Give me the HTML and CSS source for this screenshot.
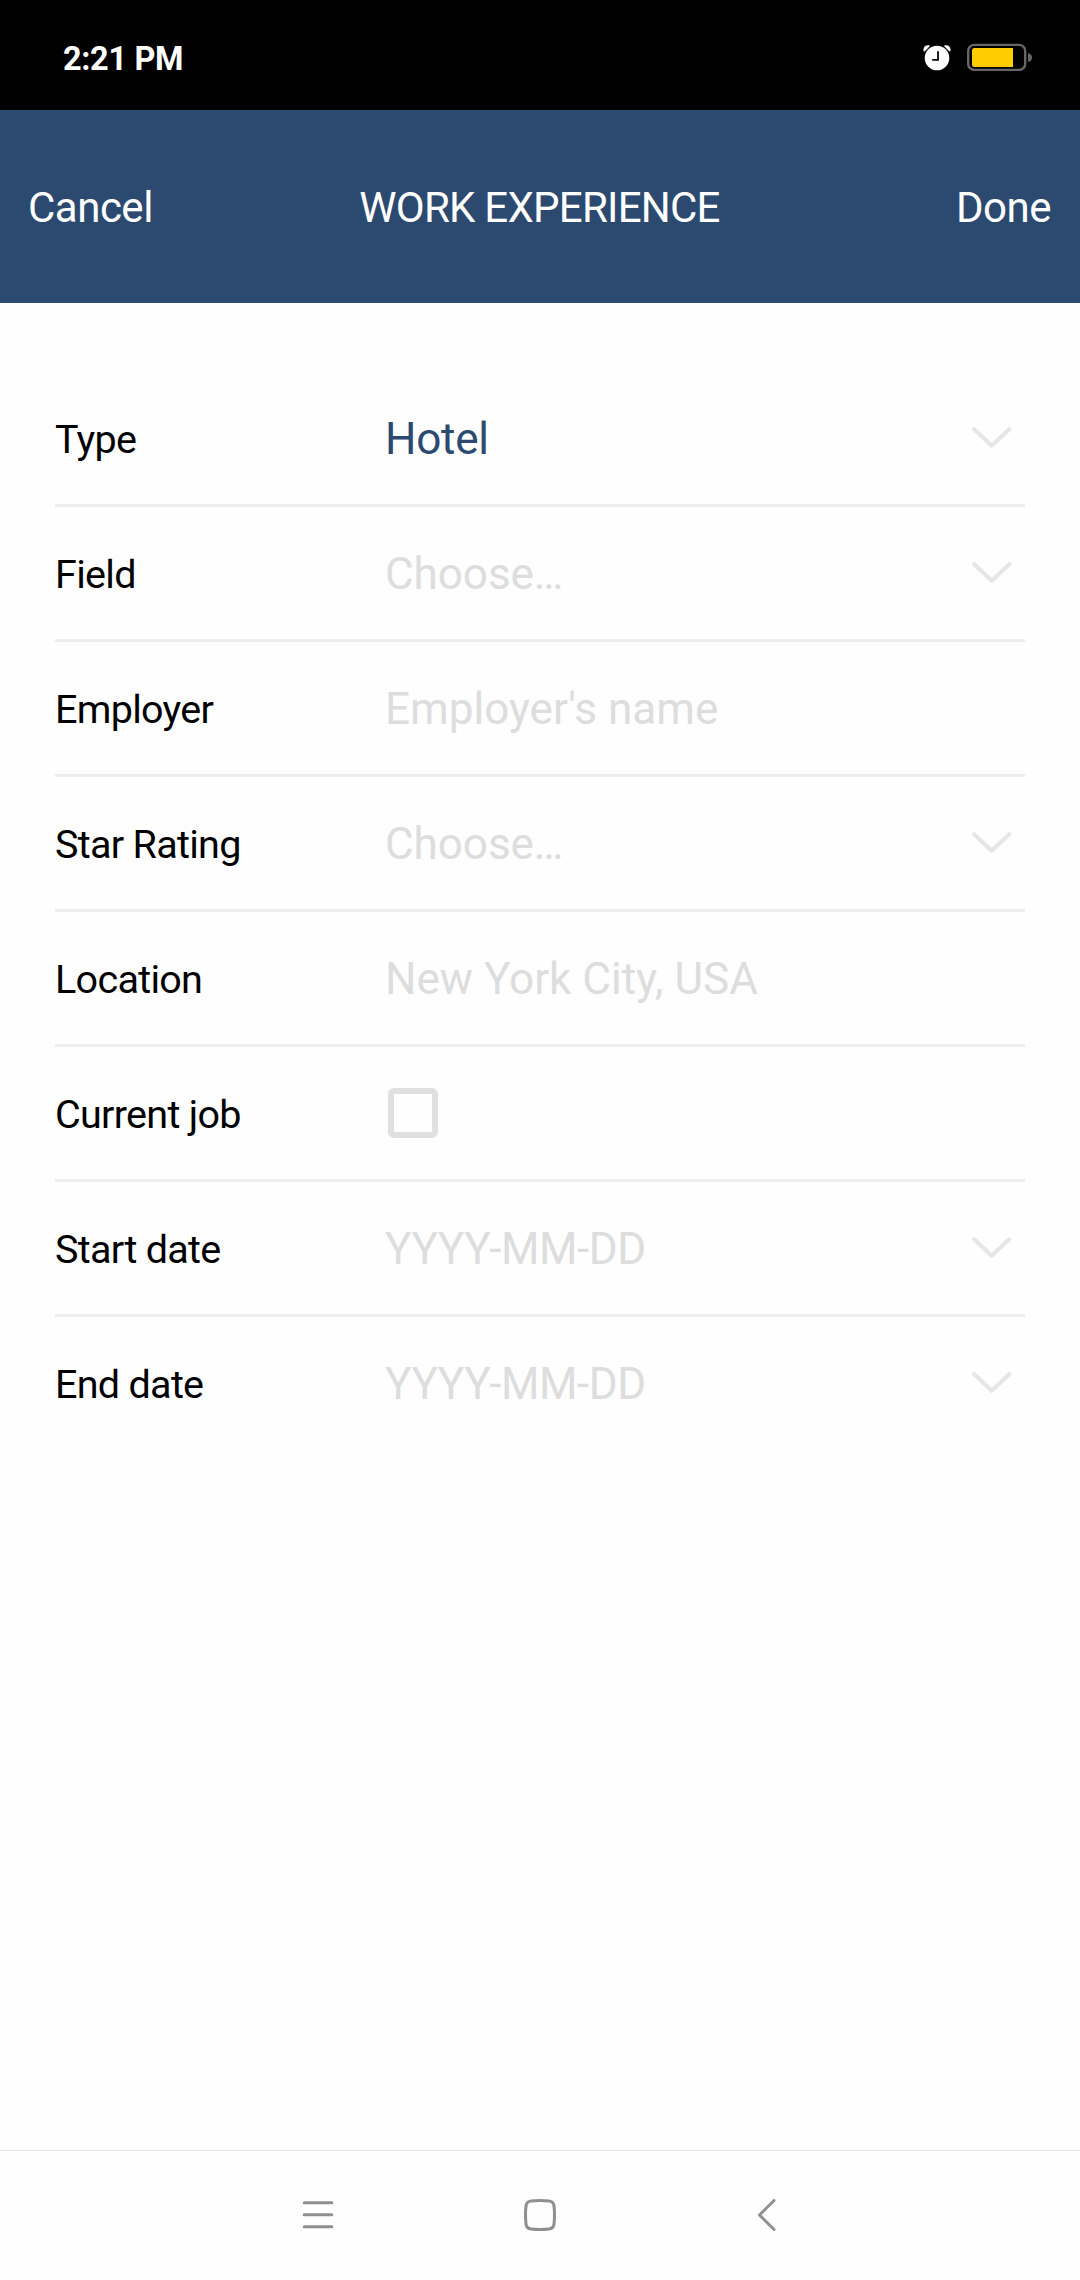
FILE: index.html
```html
<!DOCTYPE html>
<html lang="en">
<head>
<meta charset="utf-8">
<title>Work experience</title>
<link rel="stylesheet" href="styles.css">
</head>
<body>
<svg class="defs" width="0" height="0" aria-hidden="true">
  <symbol id="chevron" viewBox="0 0 40 22"><path d="M2.2 2.3 19.7 18.8 37.2 2.3" fill="none" stroke="#e6e6e6" stroke-width="4.2" stroke-linecap="round" stroke-linejoin="round"/></symbol>
</svg>
<div class="screen">
  <div class="status">
    <span class="time">2:21 PM</span>
    <div class="status-icons">
      <svg width="28" height="28" viewBox="0 0 28 28">
        <path d="M.6 8.2C-.3 4 2.8 1.2 7.2 2.7L1.6 8.4ZM27.4 8.2C28.3 4 25.2 1.2 20.8 2.7L26.4 8.4Z" fill="#fff"/>
        <circle cx="14" cy="15" r="12.3" fill="#fff"/>
        <path d="M15 8.3V16.8H9.2" fill="none" stroke="#000" stroke-width="1.8"/>
      </svg>
      <svg width="66" height="28" viewBox="0 0 66 28">
        <rect x="1.2" y="1.9" width="57" height="25" rx="6" fill="none" stroke="#666" stroke-width="2.4"/>
        <path d="M7.5 5H46V24H7.5Q5 24 5 21.5V7.5Q5 5 7.5 5Z" fill="#fc0"/>
        <path d="M61 10Q65 11 65 14.5T61 19Z" fill="#666"/>
      </svg>
    </div>
  </div>
  <header class="header">
    <span class="action">Cancel</span>
    <span class="title">WORK EXPERIENCE</span>
    <span class="action done">Done</span>
  </header>
  <main class="form">
    <div class="row"><span class="label">Type</span><span class="value chosen">Hotel</span><svg class="chev"><use href="#chevron"/></svg></div>
    <div class="row"><span class="label">Field</span><span class="value choose">Choose…</span><svg class="chev"><use href="#chevron"/></svg></div>
    <div class="row"><span class="label">Employer</span><span class="value">Employer's name</span></div>
    <div class="row"><span class="label">Star Rating</span><span class="value choose">Choose…</span><svg class="chev"><use href="#chevron"/></svg></div>
    <div class="row"><span class="label">Location</span><span class="value">New York City, USA</span></div>
    <div class="row"><span class="label">Current job</span><span class="checkbox"></span></div>
    <div class="row"><span class="label">Start date</span><span class="value date">YYYY-MM-DD</span><svg class="chev"><use href="#chevron"/></svg></div>
    <div class="row"><span class="label">End date</span><span class="value date">YYYY-MM-DD</span><svg class="chev"><use href="#chevron"/></svg></div>
  </main>
  <nav class="nav">
    <svg width="32" height="32" viewBox="0 0 32 32"><path d="M2.2 3.7H29.8M2.2 15.8H29.8M2.2 27.8H29.8"/></svg>
    <svg width="32" height="32" viewBox="0 0 32 32"><path d="M7 2Q16 1 25 2Q29.5 2.5 30 7Q31 16 30 25Q29.5 29.5 25 30Q16 31 7 30Q2.5 29.5 2 25Q1 16 2 7Q2.5 2.5 7 2Z"/></svg>
    <svg class="back" width="20" height="32" viewBox="0 0 20 32"><path d="M17 1.5 2.5 16 17 30.5"/></svg>
  </nav>
</div>
</body>
</html>
```
FILE: styles.css
```css
* { box-sizing: border-box; }
body { margin: 0; font-family: Roboto, "Liberation Sans", sans-serif; background: #fefefe; }
.defs { display: none; }
.screen { width: 1080px; height: 2280px; display: flex; flex-direction: column; }

.status { height: 110px; padding: 0 47px 0 63px; background: #000; color: #fff; display: flex; justify-content: space-between; align-items: center; }
.time { font-size: 32.5px; font-weight: 700; line-height: 38px; letter-spacing: -0.35px; padding-top: 7px; }
.status-icons { display: flex; gap: 16px; padding-top: 4px; }

.header { height: 193px; padding: 3px 29px 0 28px; background: #2c4a70; color: #fff; display: grid; grid-template-columns: 1fr auto 1fr; align-items: center; font-size: 42px; line-height: 50px; letter-spacing: -0.5px; }
.title { letter-spacing: -0.75px; }
.done { text-align: right; }

.form { flex: 1; padding: 69px 55px 0; }
.row { height: 135px; display: flex; align-items: center; border-bottom: 3px solid #eee; }
.row:last-child { border-bottom-color: transparent; }
.label { width: 330px; font-size: 39.5px; line-height: 46px; letter-spacing: -0.7px; color: #000; padding-top: 4px; }
.value { flex: 1; font-size: 44.1px; line-height: 52px; color: #ddd; padding-top: 2px; }
.chosen { color: #2c4a70; letter-spacing: -0.3px; }
.choose { letter-spacing: -0.1px; }
.date { letter-spacing: -0.45px; }
.chev { width: 40px; height: 22px; margin-right: 13px; }
.checkbox { width: 50px; height: 50px; margin-left: 3px; border: 6px solid #e0e0e0; border-radius: 6px; }

.nav { height: 130px; border-top: 1px solid #e2e2e2; padding: 0 302px 1px; display: flex; align-items: center; gap: 190px; }
.nav svg { flex: none; fill: none; stroke: #8f8f8f; stroke-width: 3; stroke-linecap: round; stroke-linejoin: round; }
.nav .back { margin-left: 11px; }
```
